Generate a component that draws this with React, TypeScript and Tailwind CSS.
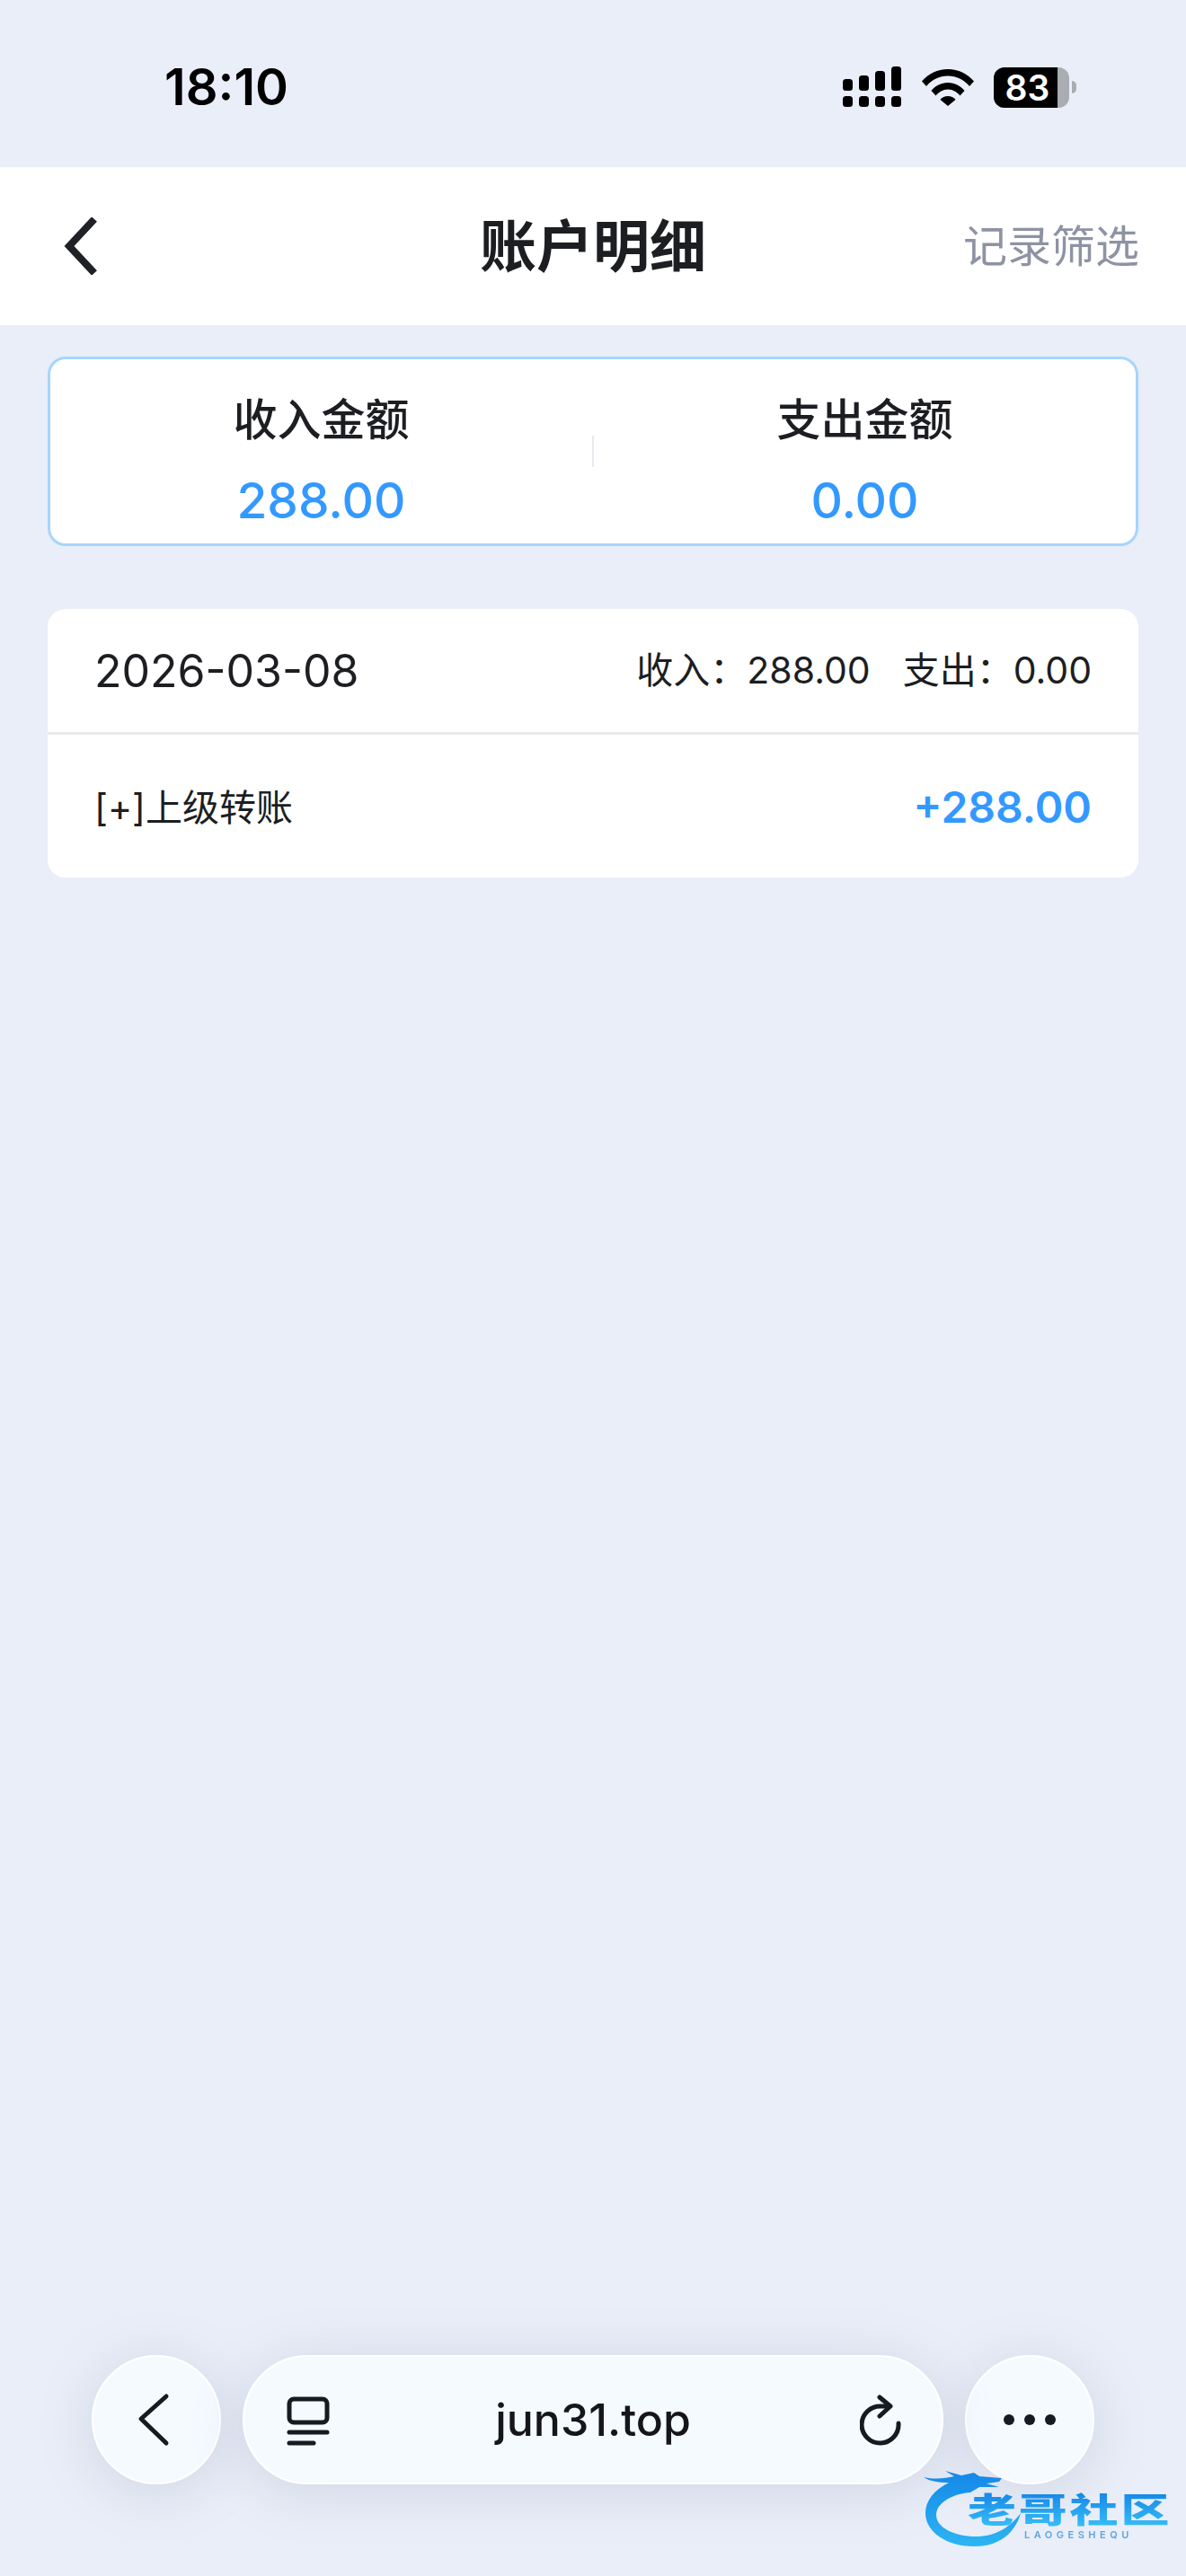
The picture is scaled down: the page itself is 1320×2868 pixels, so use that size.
const font = { fontFamily: '"Inter", "Noto Sans CJK SC", sans-serif' };

const SignalIcon = () => (
  <svg width="66" height="46" viewBox="0 0 66 46" fill="#000">
    <rect x="0" y="14" width="11" height="13" rx="3.5" />
    <rect x="18" y="10" width="11" height="17" rx="3.5" />
    <rect x="36" y="5" width="11" height="22" rx="3.5" />
    <rect x="54" y="0" width="11" height="27" rx="3.5" />
    <rect x="0" y="33" width="11" height="12" rx="3.5" />
    <rect x="18" y="33" width="11" height="12" rx="3.5" />
    <rect x="36" y="33" width="11" height="12" rx="3.5" />
    <rect x="54" y="33" width="11" height="12" rx="3.5" />
  </svg>
);

const WifiIcon = () => (
  <svg width="58" height="42" viewBox="0 0 58 42" fill="#000">
    <path d="M0 14.5C7.5 6 17.5 1 29 1s21.500 5 29 13.500l-5 5.500C46.500 12.500 38.500 8.500 29 8.500S11.500 12.500 5 20z" />
    <path d="M10.500 25C15 19.500 21.500 16 29 16s14 3.500 18.500 9l-5 5.500C39 26.500 34.500 23.500 29 23.500S19 26.500 15.500 30.500z" />
    <path d="M20.500 35C22.500 32.500 25.500 31 29 31s6.500 1.500 8.500 4L29 42z" />
  </svg>
);

const Battery = () => (
  <div className="flex items-center">
    <div className="relative flex h-[45px] w-[84px] items-center overflow-hidden rounded-[12px] bg-[#a9acb3]">
      <div className="flex h-full w-[71px] items-center justify-center bg-black pl-[4px] text-[39px] font-semibold leading-none text-white">
        83
      </div>
    </div>
    <div className="ml-[3px] h-[14px] w-[5px] rounded-r-full bg-[#a9acb3]" />
  </div>
);

const StatusBar = () => (
  <div className="flex h-[186px] items-start justify-between pl-[183px] pr-[122px] pt-[74px]">
    <span className="text-[56px] font-semibold leading-[46px] text-black">18:10</span>
    <div className="flex items-center gap-[22px]">
      <SignalIcon />
      <WifiIcon />
      <Battery />
    </div>
  </div>
);

const Header = () => (
  <header className="relative flex h-[176px] items-center justify-center bg-white">
    <svg className="absolute left-[70px] top-[56px]" width="42" height="64" viewBox="0 0 42 64" fill="none" stroke="#1f2126" strokeWidth="8">
      <path d="M35 2 L7 32 L35 62" />
    </svg>
    <h1 className="text-[63px] font-bold leading-none text-[#1c1e22]">账户明细</h1>
    <span className="absolute right-[52px] text-[49px] leading-none text-[#8e93a3]">记录筛选</span>
  </header>
);

const Summary = ({ label, value }: { label: string; value: string }) => (
  <div className="flex flex-1 flex-col items-center pt-[22px]">
    <span className="text-[49px] font-medium leading-[56px] text-[#1c1e22]">{label}</span>
    <span className="mt-[30px] text-[55px] font-medium leading-[62px] text-[#3399ff]">{value}</span>
  </div>
);

const BottomBar = () => (
  <div className="mt-auto flex items-center justify-center gap-[24px] px-[102px] pb-[102px]">
    <button className="flex h-[144px] w-[144px] shrink-0 items-center justify-center rounded-full border-2 border-white bg-[#f5faff] pr-[6px] shadow-[0_8px_60px_rgba(120,130,160,0.22)]">
      <svg width="38" height="60" viewBox="0 0 38 60" fill="none" stroke="#171a21" strokeWidth="5" strokeLinecap="round" strokeLinejoin="round">
        <path d="M33 4 L5 29 L33 56" />
      </svg>
    </button>
    <div className="relative flex h-[144px] flex-1 items-center justify-center rounded-full border-2 border-white bg-[#f5faff] shadow-[0_8px_60px_rgba(120,130,160,0.22)]">
      <svg className="absolute left-[47px] top-[44px]" width="48" height="56" viewBox="0 0 48 56" fill="none" stroke="#171a21" strokeWidth="5" strokeLinecap="round">
        <rect x="3" y="3" width="42" height="26" rx="5" />
        <path d="M3 40 H45 M3 52 H30" />
      </svg>
      <span className="text-[50px] font-medium leading-none text-[#14161b]">jun31.top</span>
      <svg className="absolute right-[43px] top-[42px]" width="48" height="58" viewBox="0 0 48 58" fill="none" stroke="#171a21" strokeWidth="5" strokeLinecap="round" strokeLinejoin="round">
        <path d="M43 32 A20.500 20.500 0 1 1 24 13 L33 13" />
        <path d="M22 3 L34 13 L22 24" />
      </svg>
    </div>
    <button className="flex h-[144px] w-[144px] shrink-0 items-center justify-center gap-[11px] rounded-full border-2 border-white bg-[#f5faff] shadow-[0_8px_60px_rgba(120,130,160,0.22)]">
      <span className="h-[12px] w-[12px] rounded-full bg-[#171a21]" />
      <span className="h-[12px] w-[12px] rounded-full bg-[#171a21]" />
      <span className="h-[12px] w-[12px] rounded-full bg-[#171a21]" />
    </button>
  </div>
);

const Watermark = () => (
  <div className="absolute left-[1028px] top-[2750px] h-[86px] w-[272px] blur-[0.7px]">
    <svg className="absolute left-0 top-0" width="272" height="86" viewBox="0 0 272 86" fill="none">
      <defs>
        <linearGradient id="swoosh" x1="0" y1="0" x2="0" y2="1">
          <stop offset="0" stopColor="#1487e8" />
          <stop offset="1" stopColor="#2db5f2" />
        </linearGradient>
      </defs>
      <path d="M0 8 C14 11 24 9 34 7 L24 1 L42 6 L56 3 L62 7 L87 9 L84 13 L70 15 L84 19 L62 19 L52 25 C34 26 14 36 14 50 C14 64 34 74 58 74 C80 74 96 64 108 48 C102 70 84 85 58 85 C28 86 2 70 2 48 C2 34 12 22 28 14 C16 14 6 12 0 8Z" fill="url(#swoosh)" />
    </svg>
    <span className="absolute left-[49px] top-[25px] origin-left scale-x-[1.42] whitespace-nowrap bg-gradient-to-b from-[#1587e8] to-[#38bdf5] bg-clip-text text-[38px] font-black leading-[38px] tracking-[2px] text-transparent">
      老哥社区
    </span>
    <span className="absolute left-[112px] top-[67px] whitespace-nowrap text-[11px] font-semibold leading-none tracking-[4.500px] text-[#5fa5de]">LAOGESHEQU</span>
  </div>
);

export default function App() {
  return (
    <div className="relative flex min-h-[2868px] flex-col overflow-hidden bg-[#e9eef8]" style={font}>
      <StatusBar />
      <Header />
      <main className="px-[53px]">
        <section className="mt-[35px] flex h-[211px] items-center rounded-[20px] border-[3px] border-[#a6d5ff] bg-white">
          <Summary label="收入金额" value="288.00" />
          <div className="h-[35px] w-[2px] bg-[#e6e9ef]" />
          <Summary label="支出金额" value="0.00" />
        </section>
        <section className="mt-[70px] rounded-[20px] bg-white">
          <div className="flex h-[140px] items-center justify-between border-b-[3px] border-[#e8e9ec] px-[52px]">
            <span className="text-[50px] leading-none text-[#1c1e22]">2026-03-08</span>
            <div className="flex items-center gap-[36px] text-[41px] leading-none text-[#1c1e22]">
              <span>收入：288.00</span>
              <span>支出：0.00</span>
            </div>
          </div>
          <div className="flex h-[159px] items-center justify-between px-[52px] pt-[3px]">
            <span className="text-[41px] leading-none text-[#1c1e22]">[+]上级转账</span>
            <span className="text-[48px] font-semibold leading-none text-[#3399ff]">+288.00</span>
          </div>
        </section>
      </main>
      <BottomBar />
      <Watermark />
    </div>
  );
}
